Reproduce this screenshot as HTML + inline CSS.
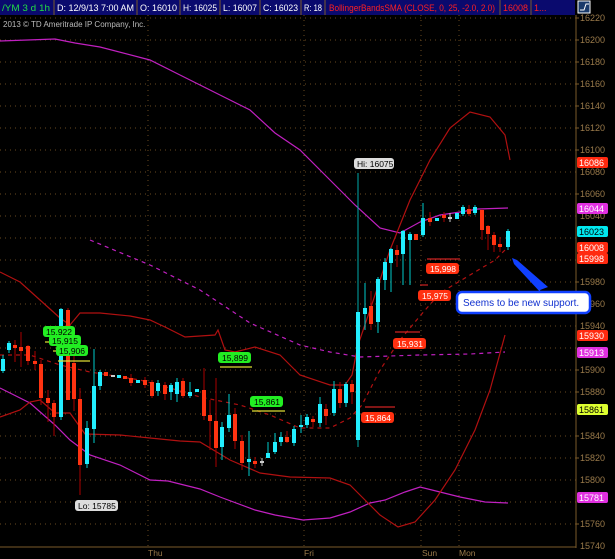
<!DOCTYPE html>
<html><head><meta charset="utf-8"><style>
html,body{margin:0;padding:0;background:#000;width:615px;height:559px;overflow:hidden}
svg{display:block;font-family:"Liberation Sans",sans-serif}
</style></head><body>
<svg width="615" height="559" viewBox="0 0 615 559" xmlns="http://www.w3.org/2000/svg">
<rect width="615" height="559" fill="#000"/>
<!-- top bar -->
<rect x="0" y="0" width="575" height="15" fill="#0a0a6e"/>
<g fill="none" stroke="#7a5a2a" stroke-width="1">
<line x1="54" y1="0" x2="54" y2="15"/><line x1="137" y1="0" x2="137" y2="15"/><line x1="180" y1="0" x2="180" y2="15"/><line x1="220" y1="0" x2="220" y2="15"/><line x1="260" y1="0" x2="260" y2="15"/><line x1="301" y1="0" x2="301" y2="15"/><line x1="325" y1="0" x2="325" y2="15"/><line x1="500" y1="0" x2="500" y2="15"/><line x1="531" y1="0" x2="531" y2="15"/>
</g>
<g font-size="9" fill="#fff">
<text x="2" y="11" fill="#22dd44" textLength="48" lengthAdjust="spacingAndGlyphs">/YM 3 d 1h</text>
<text x="57" y="11" textLength="77" lengthAdjust="spacingAndGlyphs">D: 12/9/13 7:00 AM</text>
<text x="140" y="11" textLength="37" lengthAdjust="spacingAndGlyphs">O: 16010</text>
<text x="183" y="11" textLength="34" lengthAdjust="spacingAndGlyphs">H: 16025</text>
<text x="223" y="11" textLength="34" lengthAdjust="spacingAndGlyphs">L: 16007</text>
<text x="263" y="11" textLength="35" lengthAdjust="spacingAndGlyphs">C: 16023</text>
<text x="304" y="11" textLength="18" lengthAdjust="spacingAndGlyphs">R: 18</text>
<text x="329" y="11" fill="#ff2020" textLength="166" lengthAdjust="spacingAndGlyphs">BollingerBandsSMA (CLOSE, 0, 25, -2.0, 2.0)</text>
<text x="503" y="11" fill="#ff2020" textLength="25" lengthAdjust="spacingAndGlyphs">16008</text>
<text x="534" y="11" fill="#ff2020">1...</text>
</g>
<rect x="578" y="1" width="12" height="12" fill="#1a3a6a" stroke="#fff" stroke-width="1"/>
<path d="M580 10 L584 10 L586 4 L589 4" stroke="#fff" fill="none"/>
<!-- grid -->
<g stroke="#6a4a20" stroke-width="1" stroke-dasharray="1 4">
<line x1="0" y1="18" x2="576" y2="18"/><line x1="0" y1="40" x2="576" y2="40"/><line x1="0" y1="62" x2="576" y2="62"/><line x1="0" y1="84" x2="576" y2="84"/><line x1="0" y1="106" x2="576" y2="106"/><line x1="0" y1="128" x2="576" y2="128"/><line x1="0" y1="150" x2="576" y2="150"/><line x1="0" y1="172" x2="576" y2="172"/><line x1="0" y1="194" x2="576" y2="194"/><line x1="0" y1="216" x2="576" y2="216"/><line x1="0" y1="238" x2="576" y2="238"/><line x1="0" y1="260" x2="576" y2="260"/><line x1="0" y1="282" x2="576" y2="282"/><line x1="0" y1="304" x2="576" y2="304"/><line x1="0" y1="326" x2="576" y2="326"/><line x1="0" y1="348" x2="576" y2="348"/><line x1="0" y1="370" x2="576" y2="370"/><line x1="0" y1="392" x2="576" y2="392"/><line x1="0" y1="414" x2="576" y2="414"/><line x1="0" y1="436" x2="576" y2="436"/><line x1="0" y1="458" x2="576" y2="458"/><line x1="0" y1="480" x2="576" y2="480"/><line x1="0" y1="502" x2="576" y2="502"/><line x1="0" y1="524" x2="576" y2="524"/>
<line x1="148" y1="15" x2="148" y2="547"/><line x1="304" y1="15" x2="304" y2="547"/><line x1="421" y1="15" x2="421" y2="547"/><line x1="459" y1="15" x2="459" y2="547"/>
</g>
<line x1="576" y1="15" x2="576" y2="548" stroke="#7a5a2a"/>
<line x1="0" y1="547" x2="576" y2="547" stroke="#7a5a2a"/>
<text x="3" y="27" font-size="8" fill="#bbb">2013 © TD Ameritrade IP Company, Inc.</text>
<!-- right axis labels -->
<g font-size="9" fill="#9a7a4a">
<text x="580" y="21">16220</text><text x="580" y="43">16200</text><text x="580" y="65">16180</text><text x="580" y="87">16160</text><text x="580" y="109">16140</text><text x="580" y="131">16120</text><text x="580" y="153">16100</text><text x="580" y="175">16080</text><text x="580" y="197">16060</text><text x="580" y="219">16040</text><text x="580" y="263">15998</text><text x="580" y="285">15980</text><text x="580" y="307">15960</text><text x="580" y="329">15940</text><text x="580" y="373">15900</text><text x="580" y="395">15880</text><text x="580" y="439">15840</text><text x="580" y="461">15820</text><text x="580" y="483">15800</text><text x="580" y="527">15760</text><text x="580" y="549">15740</text>
</g>
<g stroke="#7a5a2a"><line x1="576" y1="18" x2="579" y2="18"/><line x1="576" y1="40" x2="579" y2="40"/><line x1="576" y1="62" x2="579" y2="62"/><line x1="576" y1="84" x2="579" y2="84"/><line x1="576" y1="106" x2="579" y2="106"/><line x1="576" y1="128" x2="579" y2="128"/><line x1="576" y1="150" x2="579" y2="150"/><line x1="576" y1="194" x2="579" y2="194"/><line x1="576" y1="282" x2="579" y2="282"/><line x1="576" y1="304" x2="579" y2="304"/><line x1="576" y1="370" x2="579" y2="370"/><line x1="576" y1="392" x2="579" y2="392"/><line x1="576" y1="436" x2="579" y2="436"/><line x1="576" y1="458" x2="579" y2="458"/><line x1="576" y1="524" x2="579" y2="524"/></g>
<g font-size="9">
<rect x="577" y="157" width="31" height="11" rx="2" fill="#ff2a10"/><text x="579" y="166" fill="#fff">16086</text>
<rect x="577" y="203" width="31" height="11" rx="2" fill="#e030e0"/><text x="579" y="212" fill="#fff">16044</text>
<rect x="577" y="226" width="31" height="11" rx="2" fill="#00e8f0"/><text x="579" y="235" fill="#000">16023</text>
<rect x="577" y="242" width="31" height="11" rx="2" fill="#ff2a10"/><text x="579" y="251" fill="#fff">16008</text>
<rect x="577" y="253" width="31" height="11" rx="2" fill="#ff2a10"/><text x="579" y="262" fill="#fff">15998</text>
<rect x="577" y="330" width="31" height="11" rx="2" fill="#ff2a10"/><text x="579" y="339" fill="#fff">15930</text>
<rect x="577" y="347" width="31" height="11" rx="2" fill="#e030e0"/><text x="579" y="356" fill="#fff">15913</text>
<rect x="577" y="404" width="31" height="11" rx="2" fill="#ddff30"/><text x="579" y="413" fill="#000">15861</text>
<rect x="577" y="492" width="31" height="11" rx="2" fill="#e030e0"/><text x="579" y="501" fill="#fff">15781</text>
</g>
<!-- lines -->
<g fill="none" stroke-width="1.2">
<polyline stroke="#c020c0" points="0,41 55,39 75,43 100,47 150,60 180,75 220,95 250,110 275,133 300,150 330,180 355,205 380,228 400,233 420,222 440,215 460,212 478,209 508,208"/>
<polyline stroke="#c020c0" points="0,388 30,403 55,425 70,440 90,455 120,465 150,480 168,481 200,489 220,497 255,510 275,515 303,520 330,518 350,512 370,503 385,500 405,492 420,487 440,492 460,497 485,502 508,503"/>
<polyline stroke="#c020c0" stroke-dasharray="4 4" points="90,240 150,265 200,290 250,323 300,345 330,352 360,357 420,355 470,354 505,352"/>
<polyline stroke="#b01010" points="0,272 20,282 40,300 60,318 70,325 80,313 100,313 130,316 150,320 165,327 185,337 215,335 218,330 225,350 235,352 255,347 280,355 300,375 330,385 345,385 352,375 358,345 370,310 390,250 410,200 430,160 450,128 470,112 490,117 505,135 510,160"/>
<polyline stroke="#b01010" stroke-dasharray="4 4" points="0,355 30,355 60,365 90,372 140,380 170,388 200,397 240,405 270,415 300,428 330,428 350,418 362,405 380,370 400,340 420,316 440,293 470,275 495,260 510,245"/>
<polyline stroke="#b01010" points="0,417 20,410 30,402 40,400 55,413 70,413 85,434 120,435 150,438 180,441 200,442 230,460 260,473 290,477 330,478 350,485 365,500 380,515 398,527 415,522 435,500 455,470 475,430 490,390 505,335"/>
</g>
<!-- candles -->
<g stroke-width="1">
<line x1="3" y1="355" x2="3" y2="373" stroke="#0cc"/><rect x="1" y="359" width="4" height="12" fill="#2ef"/>
<line x1="9" y1="341" x2="9" y2="353" stroke="#0cc"/><rect x="7" y="343" width="4" height="7" fill="#2ef"/>
<line x1="15" y1="340" x2="15" y2="362" stroke="#a00"/><rect x="13" y="345" width="4" height="3" fill="#f31"/>
<line x1="21" y1="332" x2="21" y2="367" stroke="#a00"/><rect x="19" y="347" width="4" height="4" fill="#f31"/>
<line x1="28" y1="345" x2="28" y2="365" stroke="#a00"/><rect x="26" y="346" width="4" height="15" fill="#f31"/>
<line x1="35" y1="351" x2="35" y2="370" stroke="#a00"/><rect x="33" y="361" width="4" height="3" fill="#f31"/>
<line x1="41" y1="360" x2="41" y2="405" stroke="#a00"/><rect x="39" y="364" width="4" height="34" fill="#f31"/>
<line x1="48" y1="390" x2="48" y2="422" stroke="#a00"/><rect x="46" y="398" width="4" height="5" fill="#f31"/>
<line x1="54" y1="400" x2="54" y2="436" stroke="#a00"/><rect x="52" y="403" width="4" height="14" fill="#f31"/>
<line x1="61" y1="308" x2="61" y2="420" stroke="#0cc"/><rect x="59" y="309" width="4" height="108" fill="#2ef"/>
<line x1="68" y1="308" x2="68" y2="375" stroke="#a00"/><rect x="66" y="310" width="4" height="90" fill="#f31"/>
<line x1="74" y1="355" x2="74" y2="411" stroke="#a00"/><rect x="72" y="363" width="4" height="36" fill="#f31"/>
<line x1="80" y1="388" x2="80" y2="495" stroke="#a00"/><rect x="78" y="399" width="4" height="66" fill="#f31"/>
<line x1="87" y1="421" x2="87" y2="468" stroke="#0cc"/><rect x="85" y="428" width="4" height="36" fill="#2ef"/>
<line x1="94" y1="349" x2="94" y2="443" stroke="#0cc"/><rect x="92" y="386" width="4" height="43" fill="#2ef"/>
<line x1="100" y1="370" x2="100" y2="390" stroke="#0cc"/><rect x="98" y="372" width="4" height="14" fill="#2ef"/>
<rect x="104" y="372" width="4" height="4" fill="#f31"/>
<rect x="111" y="375" width="4" height="2" fill="#ccc"/>
<rect x="117" y="375" width="4" height="3" fill="#2ef"/>
<rect x="123" y="376" width="4" height="3" fill="#f31"/>
<line x1="131" y1="374" x2="131" y2="386" stroke="#a00"/><rect x="129" y="378" width="4" height="5" fill="#f31"/>
<rect x="136" y="380" width="4" height="3" fill="#2ef"/>
<line x1="145" y1="377" x2="145" y2="388" stroke="#a00"/><rect x="143" y="380" width="4" height="5" fill="#f31"/>
<line x1="152" y1="380" x2="152" y2="398" stroke="#a00"/><rect x="150" y="382" width="4" height="14" fill="#f31"/>
<line x1="158" y1="380" x2="158" y2="396" stroke="#0cc"/><rect x="156" y="383" width="4" height="8" fill="#2ef"/>
<line x1="165" y1="382" x2="165" y2="400" stroke="#a00"/><rect x="163" y="385" width="4" height="9" fill="#f31"/>
<line x1="171" y1="383" x2="171" y2="400" stroke="#0cc"/><rect x="169" y="385" width="4" height="7" fill="#2ef"/>
<line x1="177" y1="378" x2="177" y2="402" stroke="#0cc"/><rect x="175" y="382" width="4" height="12" fill="#2ef"/>
<line x1="183" y1="378" x2="183" y2="398" stroke="#a00"/><rect x="181" y="381" width="4" height="15" fill="#f31"/>
<line x1="190" y1="382" x2="190" y2="398" stroke="#0cc"/><rect x="188" y="392" width="4" height="4" fill="#2ef"/>
<rect x="195" y="389" width="4" height="3" fill="#2ef"/>
<line x1="204" y1="368" x2="204" y2="420" stroke="#a00"/><rect x="202" y="390" width="4" height="26" fill="#f31"/>
<line x1="210" y1="400" x2="210" y2="450" stroke="#a00"/><rect x="208" y="415" width="4" height="6" fill="#f31"/>
<line x1="216" y1="378" x2="216" y2="467" stroke="#a00"/><rect x="214" y="421" width="4" height="27" fill="#f31"/>
<line x1="222" y1="422" x2="222" y2="460" stroke="#0cc"/><rect x="220" y="427" width="4" height="20" fill="#2ef"/>
<line x1="229" y1="394" x2="229" y2="432" stroke="#0cc"/><rect x="227" y="415" width="4" height="13" fill="#2ef"/>
<line x1="235" y1="408" x2="235" y2="449" stroke="#a00"/><rect x="233" y="414" width="4" height="27" fill="#f31"/>
<line x1="242" y1="435" x2="242" y2="470" stroke="#a00"/><rect x="240" y="441" width="4" height="22" fill="#f31"/>
<line x1="249" y1="431" x2="249" y2="476" stroke="#0cc"/><rect x="247" y="459" width="4" height="3" fill="#2ef"/>
<line x1="255" y1="457" x2="255" y2="468" stroke="#a00"/><rect x="253" y="461" width="4" height="3" fill="#f31"/>
<line x1="262" y1="458" x2="262" y2="466" stroke="#ccc"/><rect x="260" y="461" width="4" height="2" fill="#ccc"/>
<line x1="268" y1="442" x2="268" y2="458" stroke="#0cc"/><rect x="266" y="453" width="4" height="5" fill="#2ef"/>
<line x1="275" y1="433" x2="275" y2="454" stroke="#0cc"/><rect x="273" y="442" width="4" height="10" fill="#2ef"/>
<line x1="281" y1="432" x2="281" y2="446" stroke="#0cc"/><rect x="279" y="437" width="4" height="5" fill="#2ef"/>
<line x1="287" y1="431" x2="287" y2="443" stroke="#a00"/><rect x="285" y="437" width="4" height="5" fill="#f31"/>
<line x1="294" y1="426" x2="294" y2="446" stroke="#0cc"/><rect x="292" y="429" width="4" height="14" fill="#2ef"/>
<line x1="301" y1="415" x2="301" y2="433" stroke="#0cc"/><rect x="299" y="425" width="4" height="2" fill="#2ef"/>
<line x1="307" y1="414" x2="307" y2="428" stroke="#0cc"/><rect x="305" y="417" width="4" height="8" fill="#2ef"/>
<line x1="313" y1="416" x2="313" y2="427" stroke="#a00"/><rect x="311" y="419" width="4" height="3" fill="#f31"/>
<line x1="320" y1="397" x2="320" y2="427" stroke="#0cc"/><rect x="318" y="404" width="4" height="19" fill="#2ef"/>
<line x1="326" y1="404" x2="326" y2="425" stroke="#a00"/><rect x="324" y="409" width="4" height="7" fill="#f31"/>
<line x1="334" y1="381" x2="334" y2="416" stroke="#0cc"/><rect x="332" y="389" width="4" height="24" fill="#2ef"/>
<line x1="340" y1="382" x2="340" y2="408" stroke="#a00"/><rect x="338" y="389" width="4" height="14" fill="#f31"/>
<line x1="346" y1="382" x2="346" y2="407" stroke="#0cc"/><rect x="344" y="384" width="4" height="19" fill="#2ef"/>
<line x1="352" y1="380" x2="352" y2="404" stroke="#a00"/><rect x="350" y="384" width="4" height="8" fill="#f31"/>
<line x1="358" y1="173" x2="358" y2="447" stroke="#0aa"/><rect x="356" y="312" width="4" height="128" fill="#2ef"/>
<line x1="365" y1="283" x2="365" y2="330" stroke="#0cc"/><rect x="363" y="308" width="4" height="6" fill="#2ef"/>
<line x1="371" y1="291" x2="371" y2="330" stroke="#a00"/><rect x="369" y="306" width="4" height="18" fill="#f31"/>
<line x1="378" y1="277" x2="378" y2="333" stroke="#0cc"/><rect x="376" y="279" width="4" height="43" fill="#2ef"/>
<line x1="385" y1="258" x2="385" y2="290" stroke="#0cc"/><rect x="383" y="262" width="4" height="18" fill="#2ef"/>
<line x1="391" y1="248" x2="391" y2="292" stroke="#0cc"/><rect x="389" y="249" width="4" height="14" fill="#2ef"/>
<line x1="397" y1="245" x2="397" y2="267" stroke="#a00"/><rect x="395" y="250" width="4" height="5" fill="#f31"/>
<line x1="403" y1="230" x2="403" y2="285" stroke="#0cc"/><rect x="401" y="231" width="4" height="23" fill="#2ef"/>
<line x1="410" y1="232" x2="410" y2="285" stroke="#0cc"/><rect x="408" y="234" width="4" height="6" fill="#2ef"/>
<rect x="414" y="234" width="4" height="6" fill="#f31"/>
<line x1="423" y1="203" x2="423" y2="237" stroke="#0cc"/><rect x="421" y="218" width="4" height="17" fill="#2ef"/>
<line x1="430" y1="212" x2="430" y2="226" stroke="#a00"/><rect x="428" y="218" width="4" height="4" fill="#f31"/>
<rect x="435" y="218" width="4" height="3" fill="#2ef"/>
<line x1="444" y1="212" x2="444" y2="222" stroke="#a00"/><rect x="442" y="215" width="4" height="3" fill="#f31"/>
<line x1="450" y1="213" x2="450" y2="222" stroke="#ccc"/><rect x="448" y="217" width="4" height="2" fill="#ccc"/>
<rect x="455" y="213" width="4" height="6" fill="#2ef"/>
<line x1="463" y1="205" x2="463" y2="216" stroke="#0cc"/><rect x="461" y="207" width="4" height="7" fill="#2ef"/>
<line x1="469" y1="205" x2="469" y2="216" stroke="#a00"/><rect x="467" y="209" width="4" height="5" fill="#f31"/>
<line x1="475" y1="205" x2="475" y2="215" stroke="#0cc"/><rect x="473" y="207" width="4" height="6" fill="#2ef"/>
<line x1="482" y1="209" x2="482" y2="240" stroke="#a00"/><rect x="480" y="210" width="4" height="20" fill="#f31"/>
<line x1="488" y1="225" x2="488" y2="250" stroke="#a00"/><rect x="486" y="226" width="4" height="8" fill="#f31"/>
<line x1="494" y1="232" x2="494" y2="252" stroke="#a00"/><rect x="492" y="235" width="4" height="10" fill="#f31"/>
<line x1="500" y1="237" x2="500" y2="252" stroke="#a00"/><rect x="498" y="244" width="4" height="3" fill="#f31"/>
<line x1="508" y1="229" x2="508" y2="250" stroke="#0cc"/><rect x="506" y="231" width="4" height="16" fill="#2ef"/>
</g>
<!-- level lines -->
<g stroke-width="1.2">
<line x1="45" y1="342" x2="70" y2="342" stroke="#dd3"/><line x1="53" y1="351" x2="73" y2="351" stroke="#dd3"/><line x1="58" y1="361" x2="90" y2="361" stroke="#dd3"/>
<line x1="220" y1="367" x2="252" y2="367" stroke="#dd3"/><line x1="252" y1="411" x2="285" y2="411" stroke="#dd3"/>
<line x1="427" y1="259" x2="460" y2="259" stroke="#c22"/><line x1="420" y1="285" x2="428" y2="285" stroke="#c22"/><line x1="395" y1="332" x2="420" y2="332" stroke="#c22"/><line x1="365" y1="407" x2="395" y2="407" stroke="#c22"/>
</g>
<!-- labels -->
<g font-size="8.5">
<rect x="43" y="326" width="32" height="11" rx="3" fill="#22ee22"/><text x="46" y="335" fill="#000">15,922</text>
<rect x="49" y="335" width="32" height="11" rx="3" fill="#22ee22"/><text x="52" y="344" fill="#000">15,915</text>
<rect x="56" y="345" width="32" height="11" rx="3" fill="#22ee22"/><text x="59" y="354" fill="#000">15,906</text>
<rect x="218" y="352" width="33" height="11" rx="3" fill="#22ee22"/><text x="222" y="361" fill="#000">15,899</text>
<rect x="250" y="396" width="33" height="11" rx="3" fill="#22ee22"/><text x="254" y="405" fill="#000">15,861</text>
<rect x="426" y="263" width="33" height="11" rx="3" fill="#ff3010"/><text x="430" y="272" fill="#fff">15,998</text>
<rect x="418" y="290" width="33" height="11" rx="3" fill="#ff3010"/><text x="422" y="299" fill="#fff">15,975</text>
<rect x="393" y="338" width="33" height="11" rx="3" fill="#ff3010"/><text x="397" y="347" fill="#fff">15,931</text>
<rect x="361" y="412" width="33" height="11" rx="3" fill="#ff3010"/><text x="365" y="421" fill="#fff">15,864</text>
<rect x="354" y="158" width="40" height="11" rx="3" fill="#ddd"/><text x="357" y="167" fill="#000">Hi: 16075</text>
<rect x="75" y="500" width="43" height="11" rx="3" fill="#ddd"/><text x="78" y="509" fill="#000">Lo: 15785</text>
</g>
<!-- bottom labels -->
<g font-size="8.5" fill="#9a7a4a"><text x="148" y="556">Thu</text><text x="304" y="556">Fri</text><text x="422" y="556">Sun</text><text x="459" y="556">Mon</text></g>
<!-- callout -->
<path d="M540 290 L548 287 L517 260 L512 258 L514 264 L541 293 Z" fill="#1040ff"/>
<rect x="457" y="292" width="133" height="21" rx="5" fill="#fff" stroke="#1040ff" stroke-width="2.5"/>
<text x="463" y="306" font-size="10" fill="#1030d0">Seems to be new support.</text>
</svg>
</body></html>
